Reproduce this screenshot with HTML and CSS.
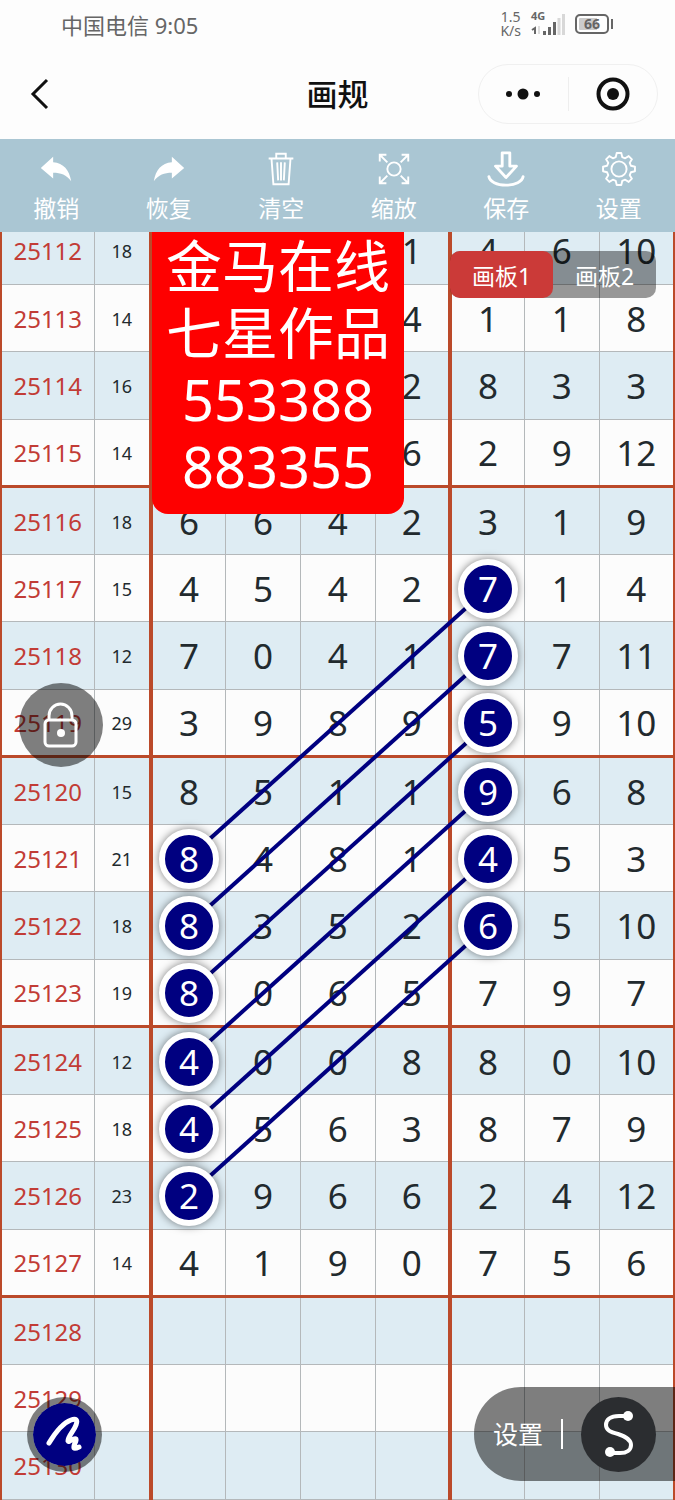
FILE: index.html
```html
<!DOCTYPE html>
<html lang="zh-CN">
<head>
    <meta charset="UTF-8">
    <meta name="viewport" content="width=device-width, initial-scale=1.0">
    <title>画规</title>
    <link rel="stylesheet" href="styles.css">
</head>
<body>
    <div class="status-bar">
        <div class="carrier">中国电信 9:05</div>
        <div class="status-icons">
            <div class="speed">1.5<br>K/s</div>
            <div class="signal">
                <span class="network">4G</span>
                <svg width="34" height="26" viewBox="0 0 34 26">
                    <path d="M1 19l3-2v6" fill="none" stroke="#666" stroke-width="2"/>
                    <path d="M8 15v8" stroke="#ddd" stroke-width="2"/>
                    <path d="M13.500 20v4M18.500 16v8M23.500 11v13" stroke="#666" stroke-width="3"/>
                    <path d="M28 7v17M32.500 3v21" stroke="#d8d8d8" stroke-width="3"/>
                </svg>
            </div>
            <div class="battery">66</div>
        </div>
    </div>

    <header class="nav-bar">
        <button class="back-button" aria-label="返回">
            <svg width="20" height="34" viewBox="0 0 20 34">
                <path d="M17 3L3 17l14 14" fill="none" stroke="#111" stroke-width="3"/>
            </svg>
        </button>
        <h1>画规</h1>
        <div class="capsule">
            <button class="capsule-button" aria-label="更多">
                <svg width="36" height="12" viewBox="0 0 36 12" fill="#111">
                    <circle cx="4" cy="6" r="3"/>
                    <circle cx="18" cy="6" r="5.500"/>
                    <circle cx="32" cy="6" r="3"/>
                </svg>
            </button>
            <button class="capsule-button" aria-label="关闭">
                <svg width="34" height="34" viewBox="0 0 34 34">
                    <circle cx="17" cy="17" r="14.500" fill="none" stroke="#111" stroke-width="4"/>
                    <circle cx="17" cy="17" r="6" fill="#111"/>
                </svg>
            </button>
        </div>
    </header>

    <nav class="toolbar">
        <button class="tool">
            <svg width="40" height="40" viewBox="0 0 40 40">
                <path d="M4 19L17 7v6c11 1 17 8 19 20-5-7-11-9-19-9v6z" fill="#fff"/>
            </svg>
            撤销
        </button>
        <button class="tool">
            <svg width="40" height="40" viewBox="0 0 40 40">
                <path d="M36 19L23 7v6C12 14 6 21 4 33c5-7 11-9 19-9v6z" fill="#fff"/>
            </svg>
            恢复
        </button>
        <button class="tool">
            <svg width="40" height="40" viewBox="0 0 40 40" fill="none" stroke="#fff" stroke-width="2">
                <path d="M7 9h26M15 9V4h10v5M10 9l2 27h16l2-27M16 13l1 19M20 13v19M24 13l-1 19"/>
            </svg>
            清空
        </button>
        <button class="tool">
            <svg width="40" height="40" viewBox="0 0 40 40" fill="none" stroke="#fff" stroke-width="2">
                <circle cx="20" cy="20" r="7"/>
                <path d="M12 5H5v7M5 5l8 8M28 5h7v7M35 5l-8 8M5 28v7h7M5 35l8-8M35 28v7h-7M35 35l-8-8"/>
            </svg>
            缩放
        </button>
        <button class="tool">
            <svg width="40" height="40" viewBox="0 0 40 40" fill="none" stroke="#fff" stroke-width="3" stroke-linejoin="round" stroke-linecap="round">
                <path d="M16 3h8v14h7L20 29 9 17h7zM2 28c1 5 8 9 18 9s17-4 18-9"/>
            </svg>
            保存
        </button>
        <button class="tool">
            <svg width="40" height="40" viewBox="0 0 40 40" fill="none" stroke="#fff" stroke-width="2" stroke-linejoin="round">
                <path d="M16.600 7.400L17.600 3.200H22.400L23.400 7.400L26.500 8.700L30.200 6.400L33.600 9.800L31.300 13.500L32.600 16.600L36.800 17.600V22.400L32.600 23.400L31.300 26.500L33.600 30.200L30.200 33.600L26.500 31.300L23.400 32.600L22.400 36.800H17.600L16.600 32.600L13.500 31.300L9.800 33.600L6.400 30.200L8.700 26.500L7.400 23.400L3.200 22.400V17.600L7.400 16.600L8.700 13.500L6.400 9.800L9.800 6.400L13.500 8.700Z"/>
                <circle cx="20" cy="20" r="8"/>
            </svg>
            设置
        </button>
    </nav>

    <main class="board">
        <div class="chart">
            <table>
                <colgroup>
                    <col class="col-issue">
                    <col class="col-sum">
                    <col span="7">
                </colgroup>
                <tbody>
                    <tr><th>25112</th><td>18</td><td></td><td></td><td></td><td>1</td><td>4</td><td>6</td><td>10</td></tr>
                    <tr><th>25113</th><td>14</td><td></td><td></td><td></td><td>4</td><td>1</td><td>1</td><td>8</td></tr>
                    <tr><th>25114</th><td>16</td><td></td><td></td><td></td><td>2</td><td>8</td><td>3</td><td>3</td></tr>
                    <tr><th>25115</th><td>14</td><td></td><td></td><td></td><td>6</td><td>2</td><td>9</td><td>12</td></tr>
                    <tr><th>25116</th><td>18</td><td>6</td><td>6</td><td>4</td><td>2</td><td>3</td><td>1</td><td>9</td></tr>
                    <tr><th>25117</th><td>15</td><td>4</td><td>5</td><td>4</td><td>2</td><td><span class="mark">7</span></td><td>1</td><td>4</td></tr>
                    <tr><th>25118</th><td>12</td><td>7</td><td>0</td><td>4</td><td>1</td><td><span class="mark">7</span></td><td>7</td><td>11</td></tr>
                    <tr><th>25119</th><td>29</td><td>3</td><td>9</td><td>8</td><td>9</td><td><span class="mark">5</span></td><td>9</td><td>10</td></tr>
                    <tr><th>25120</th><td>15</td><td>8</td><td>5</td><td>1</td><td>1</td><td><span class="mark">9</span></td><td>6</td><td>8</td></tr>
                    <tr><th>25121</th><td>21</td><td><span class="mark">8</span></td><td>4</td><td>8</td><td>1</td><td><span class="mark">4</span></td><td>5</td><td>3</td></tr>
                    <tr><th>25122</th><td>18</td><td><span class="mark">8</span></td><td>3</td><td>5</td><td>2</td><td><span class="mark">6</span></td><td>5</td><td>10</td></tr>
                    <tr><th>25123</th><td>19</td><td><span class="mark">8</span></td><td>0</td><td>6</td><td>5</td><td>7</td><td>9</td><td>7</td></tr>
                    <tr><th>25124</th><td>12</td><td><span class="mark">4</span></td><td>0</td><td>0</td><td>8</td><td>8</td><td>0</td><td>10</td></tr>
                    <tr><th>25125</th><td>18</td><td><span class="mark">4</span></td><td>5</td><td>6</td><td>3</td><td>8</td><td>7</td><td>9</td></tr>
                    <tr><th>25126</th><td>23</td><td><span class="mark">2</span></td><td>9</td><td>6</td><td>6</td><td>2</td><td>4</td><td>12</td></tr>
                    <tr><th>25127</th><td>14</td><td>4</td><td>1</td><td>9</td><td>0</td><td>7</td><td>5</td><td>6</td></tr>
                    <tr><th>25128</th><td></td><td></td><td></td><td></td><td></td><td></td><td></td><td></td></tr>
                    <tr><th>25129</th><td></td><td></td><td></td><td></td><td></td><td></td><td></td><td></td></tr>
                    <tr><th>25130</th><td></td><td></td><td></td><td></td><td></td><td></td><td></td><td></td></tr>
                </tbody>
            </table>
            <!-- trend lines joining the marked numbers -->
            <svg class="lines" viewBox="0 0 675 1283" preserveAspectRatio="none" stroke="#000080" stroke-width="4">
                <line x1="188" y1="642" x2="488" y2="372"/>
                <line x1="188" y1="709" x2="488" y2="439"/>
                <line x1="188" y1="777" x2="488" y2="507"/>
                <line x1="188" y1="844" x2="488" y2="574"/>
                <line x1="188" y1="912" x2="488" y2="642"/>
                <line x1="188" y1="979" x2="488" y2="709"/>
            </svg>
        </div>

        <div class="note">金马在线<br>七星作品<br>553388<br>883355</div>

        <div class="board-tabs">
            <button class="board-tab active">画板1</button>
            <button class="board-tab">画板2</button>
        </div>

        <button class="lock-button" aria-label="锁定">
            <svg width="36" height="46" viewBox="0 0 36 46" fill="none" stroke="#fff" stroke-width="3">
                <rect x="2" y="18" width="31" height="26" rx="4"/>
                <path d="M6 18v-4a11.500 12 0 0 1 23 0v4"/>
                <circle cx="18" cy="31" r="4" fill="#fff" stroke="none"/>
            </svg>
        </button>

        <button class="pen-button" aria-label="画笔">
            <svg width="62" height="62" viewBox="0 0 62 62">
                <path d="M16 39C22 29 30 19 38 16c5-2 7 0 5 5-2 6-8 11-8 16 1 2 6-4 8-2 1 2-3 6-2 9 1 1 3 0 5-1" fill="none" stroke="#fff" stroke-width="5" stroke-linecap="round" stroke-linejoin="round"/>
            </svg>
        </button>

        <div class="line-panel">
            <button class="panel-settings">设置</button>
            <button class="curve-button" aria-label="曲线">
                <svg width="36" height="48" viewBox="0 0 36 48">
                    <path d="M27 6H18C9 6 5 10 5 15c0 5 4 7 12 9 9 3 13 6 13 11 0 5-4 8-11 8H9" fill="none" stroke="#fff" stroke-width="4"/>
                    <circle cx="27" cy="6" r="5" fill="#fff"/>
                    <circle cx="9" cy="42" r="5" fill="#fff"/>
                </svg>
            </button>
        </div>
    </main>
</body>
</html>
```
FILE: styles.css
```css
* {
    margin: 0;
    padding: 0;
    box-sizing: border-box;
}

body {
    font-family: "Noto Sans", "Noto Sans CJK SC", sans-serif;
    background: #fdfdfd;
    height: 100vh;
    display: flex;
    flex-direction: column;
    overflow: hidden;
}

button {
    border: none;
    background: none;
    color: inherit;
    font: inherit;
    cursor: pointer;
}

svg {
    display: block;
}

.status-bar {
    height: 50px;
    flex-shrink: 0;
    display: flex;
    align-items: center;
    justify-content: space-between;
    padding: 0 66px 2px 61px;
    color: #666;
}

.carrier {
    font-size: 22px;
}

.status-icons {
    display: flex;
    align-items: center;
    gap: 10px;
}

.speed {
    font-size: 14px;
    line-height: 14px;
    text-align: center;
}

.signal {
    position: relative;
}

.network {
    position: absolute;
    left: 0;
    top: -2px;
    font-size: 11px;
    line-height: 14px;
    font-weight: bold;
}

.battery {
    position: relative;
    width: 34px;
    height: 20px;
    border: 2px solid #666;
    border-radius: 5px;
    background: linear-gradient(to right, #ccc 66%, #fff 66%);
    box-shadow: inset 0 0 0 2px #fff;
    font-size: 14px;
    line-height: 16px;
    font-weight: bold;
    text-align: center;
}

.battery::after {
    content: "";
    position: absolute;
    right: -6px;
    top: 3px;
    width: 2px;
    height: 10px;
    background: #666;
}

.nav-bar {
    height: 89px;
    flex-shrink: 0;
    display: grid;
    grid-template-columns: 1fr auto 1fr;
    align-items: center;
    padding: 0 17px 2px;
}

.nav-bar h1 {
    font-size: 31px;
    font-weight: 500;
    line-height: 40px;
    color: #111;
}

.back-button {
    justify-self: start;
    margin-left: 13px;
}

.capsule {
    justify-self: end;
    display: flex;
    align-items: center;
    width: 180px;
    height: 60px;
    border: 1px solid #f0f0f0;
    border-radius: 30px;
}

.capsule-button {
    flex: 1;
    height: 34px;
    display: flex;
    align-items: center;
    justify-content: center;
}

.capsule-button + .capsule-button {
    border-left: 1px solid #eee;
}

.toolbar {
    height: 93px;
    flex-shrink: 0;
    display: grid;
    grid-template-columns: repeat(6, 1fr);
    background: #aac6d3;
    color: #fff;
}

.tool {
    display: flex;
    flex-direction: column;
    align-items: center;
    padding-top: 11px;
    font-size: 23px;
    line-height: 40px;
}

.tool svg {
    width: 38px;
    height: 38px;
}

.board {
    flex: 1;
    min-height: 0;
    position: relative;
    overflow: hidden;
    display: flex;
    flex-direction: column;
    justify-content: flex-end;
}

.chart {
    position: relative;
    flex-shrink: 0;
}

table {
    width: 100%;
    table-layout: fixed;
    border-collapse: collapse;
}

.col-issue {
    width: 93px;
}

.col-sum {
    width: 57px;
}

tr {
    height: 67px;
    background: #fcfcfc;
}

tr:nth-child(odd) {
    height: 68px;
    background: #deecf3;
}

th,
td {
    border: 1px solid #b4b8ba;
    border-left-color: #a4a8aa;
    padding-top: 1px;
    text-align: center;
    vertical-align: middle;
    font-size: 35px;
    line-height: 40px;
    font-weight: normal;
    color: #222a2e;
}

th {
    border-left: 2px solid #bb4a2a;
    font-size: 24px;
    color: #c23c36;
}

td:nth-child(2) {
    font-size: 18px;
}

td:nth-child(2),
td:nth-child(6) {
    border-right: 4px solid #bb4a2a;
}

td:last-child {
    border-right: 2px solid #bb4a2a;
}

/* heavy rule after every fourth issue */
tr:nth-child(4n) > * {
    border-bottom: 3px solid #bb4a2a;
}

.mark {
    display: block;
    position: relative;
    z-index: 2;
    width: 60px;
    height: 60px;
    margin: 0 auto;
    border: 6px solid #fff;
    border-radius: 50%;
    background: #000080;
    box-shadow: 0 0 8px rgba(0, 0, 0, 0.5);
    color: #fff;
    line-height: 48px;
}

.lines {
    position: absolute;
    left: 0;
    top: 0;
    z-index: 1;
    width: 100%;
    height: 100%;
}

.note {
    position: absolute;
    left: 152px;
    top: 0;
    z-index: 3;
    width: 252px;
    padding-bottom: 14px;
    border-radius: 0 0 16px 16px;
    background: #fe0000;
    color: #fff;
    font-size: 56px;
    line-height: 67px;
    text-align: center;
}

.board-tabs {
    position: absolute;
    right: 19px;
    top: 19px;
    z-index: 3;
    display: flex;
    border-radius: 10px;
    background: rgba(0, 0, 0, 0.4);
}

.board-tab {
    width: 103px;
    height: 47px;
    border-radius: 10px;
    color: #fff;
    font-size: 23px;
}

.board-tab.active {
    background: #cb3a38;
}

.lock-button {
    position: absolute;
    left: 19px;
    top: 451px;
    z-index: 3;
    width: 84px;
    height: 84px;
    border-radius: 50%;
    background: rgba(0, 0, 0, 0.5);
    display: flex;
    align-items: center;
    justify-content: center;
}

.pen-button {
    position: absolute;
    left: 27px;
    bottom: 28px;
    z-index: 3;
    width: 75px;
    height: 75px;
    border: 6px solid rgba(0, 0, 0, 0.5);
    border-radius: 50%;
    background: #000080;
    background-clip: padding-box;
}

.line-panel {
    position: absolute;
    right: 0;
    bottom: 19px;
    z-index: 3;
    height: 94px;
    padding: 0 19px;
    border-radius: 47px 0 0 47px;
    background: rgba(0, 0, 0, 0.5);
    display: flex;
    align-items: center;
    gap: 18px;
    color: #fff;
}

.panel-settings {
    height: 30px;
    padding-right: 18px;
    border-right: 2px solid #fff;
    font-size: 25px;
    line-height: 30px;
}

.curve-button {
    width: 75px;
    height: 75px;
    border-radius: 50%;
    background: #2b2d30;
    display: flex;
    align-items: center;
    justify-content: center;
}
```
